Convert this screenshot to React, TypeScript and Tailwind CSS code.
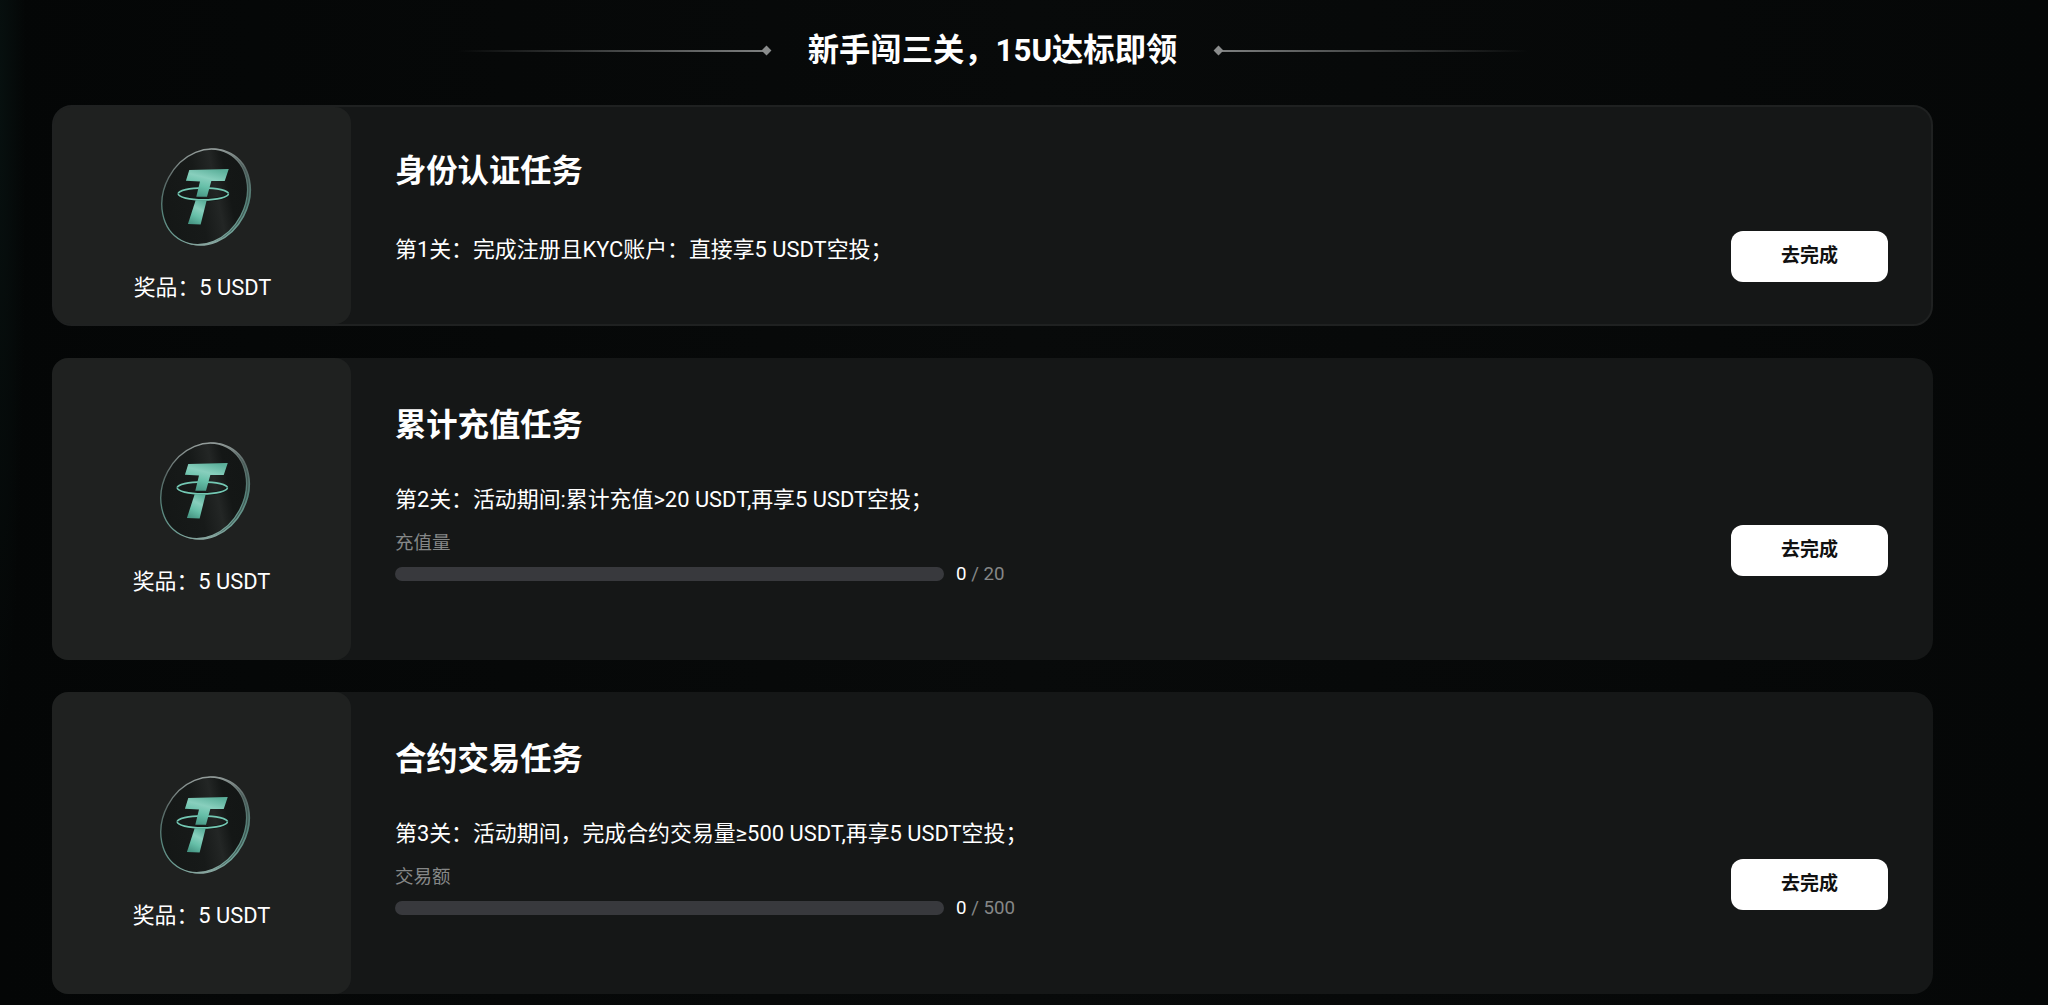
import { useId } from "react";

const tasks = [
  {
    title: "身份认证任务",
    desc: "第1关：完成注册且KYC账户：直接享5 USDT空投；",
  },
  {
    title: "累计充值任务",
    desc: "第2关：活动期间:累计充值>20 USDT,再享5 USDT空投；",
    label: "充值量",
    total: 20,
  },
  {
    title: "合约交易任务",
    desc: "第3关：活动期间，完成合约交易量≥500 USDT,再享5 USDT空投；",
    label: "交易额",
    total: 500,
  },
];

function CoinLogo() {
  const id = useId();
  return (
    <svg viewBox="90 50 280 305" className="ml-[7px] h-[102px] w-[94px]">
      <defs>
        <linearGradient id={`${id}rim`} x1="0.2" y1="0" x2="0.8" y2="1">
          <stop offset="0" stopColor="#a4acaa" />
          <stop offset="0.3" stopColor="#5a6866" />
          <stop offset="0.6" stopColor="#56847b" />
          <stop offset="0.85" stopColor="#6f9f95" />
          <stop offset="1" stopColor="#9aa8a5" />
        </linearGradient>
        <linearGradient id={`${id}t`} x1="0.7" y1="0" x2="0.3" y2="1">
          <stop offset="0" stopColor="#5cb09b" />
          <stop offset="0.35" stopColor="#88cfbd" />
          <stop offset="0.65" stopColor="#66bfa8" />
          <stop offset="1" stopColor="#479684" />
        </linearGradient>
        <linearGradient id={`${id}face`} x1="0" y1="1" x2="1" y2="0">
          <stop offset="0" stopColor="#131615" />
          <stop offset="0.45" stopColor="#171a19" />
          <stop offset="0.6" stopColor="#232625" />
          <stop offset="0.7" stopColor="#141716" />
          <stop offset="1" stopColor="#121514" />
        </linearGradient>
      </defs>
      <ellipse cx="234" cy="203" rx="122" ry="148" transform="rotate(28 234 203)" fill="#3f5853" stroke={`url(#${id}rim)`} strokeWidth="5" />
      <ellipse cx="226" cy="202" rx="122" ry="148" transform="rotate(28 226 202)" fill={`url(#${id}face)`} stroke={`url(#${id}rim)`} strokeWidth="4" />
      <path d="M147 193 A75 18 0 0 1 297 193" fill="none" stroke="#74c9b4" strokeWidth="5" />
      <path d="M180 122 L298 119 L286 155 L246 155 L233 202 L201 202 L212 156 L170 154 Z" fill={`url(#${id}t)`} />
      <path d="M147 193 A75 18 0 0 0 297 193" fill="none" stroke="#141716" strokeWidth="10" />
      <path d="M147 193 A75 18 0 0 0 297 193" fill="none" stroke="#74c9b4" strokeWidth="5" />
      <path d="M199 212 L232 212 L214 285 L176 283 Z" fill={`url(#${id}t)`} />
    </svg>
  );
}

function Divider({ flip }: { flip?: boolean }) {
  return (
    <div className={`flex w-[313px] items-center ${flip ? "flex-row-reverse" : ""}`}>
      <div
        className={`h-[2px] flex-1 ${
          flip
            ? "bg-gradient-to-l from-transparent to-[#7c7e7e]"
            : "bg-gradient-to-r from-transparent to-[#7c7e7e]"
        }`}
      />
      <div className="h-[7px] w-[7px] rotate-45 bg-[#8a8c8c]" />
    </div>
  );
}

function TaskCard({ task, index }: { task: (typeof tasks)[number]; index: number }) {
  const first = index === 0;
  return (
    <section
      className={`flex rounded-[20px] bg-[#151717] ${
        first ? "h-[221px] border-2 border-[#1f2121]" : "h-[302px]"
      }`}
    >
      <div
        className={`flex shrink-0 flex-col items-center justify-center rounded-[16px] bg-[#1f2120] pt-[17px] ${
          first ? "w-[297px]" : "w-[299px]"
        }`}
      >
        <CoinLogo />
        <div className="mt-[26px] text-[21.9px] leading-[28px] text-white">奖品：5 USDT</div>
      </div>
      <div className={`flex-1 pl-[44px] ${first ? "pt-[45px]" : "pt-[48px]"}`}>
        <h3 className="text-[31.3px] font-bold leading-[40px] text-white">{task.title}</h3>
        <p className={`text-[21.9px] leading-[28px] text-white ${first ? "mt-[44px]" : "mt-[40px]"}`}>{task.desc}</p>
        {task.label && (
          <div className="mt-[16px]">
            <div className="text-[18.5px] leading-[26px] text-[#858787]">{task.label}</div>
            <div className="mt-[6px] flex items-center">
              <div className="h-[14px] w-[549px] rounded-full bg-[#38393d]" />
              <span className="ml-[12px] text-[18.7px] leading-[24px] text-white">
                0 <span className="text-[#858787]">/ {task.total}</span>
              </span>
            </div>
          </div>
        )}
      </div>
      <div className={`flex items-center pt-[82px] ${first ? "pr-[43px]" : "pr-[45px]"}`}>
        <button className="h-[51px] w-[157px] rounded-[12px] bg-white text-[19px] font-bold text-[#111]">
          去完成
        </button>
      </div>
    </section>
  );
}

export default function App() {
  return (
    <div className="h-[1005px] overflow-hidden bg-[radial-gradient(ellipse_26px_640px_at_0_100px,#07100f_0,#04060600_100%),linear-gradient(90deg,#040606_0,#080a0a_50%,#050707_100%)] pl-[52px] pr-[115px] font-['Roboto','Noto_Sans_CJK_SC',sans-serif]">
      <div className="flex h-[105px] items-center justify-center pb-[4px]">
        <Divider />
        <h2 className="mx-[38px] text-[31.3px] font-bold leading-[44px] text-white">新手闯三关，15U达标即领</h2>
        <Divider flip />
      </div>
      <div className="flex flex-col gap-[32px]">
        {tasks.map((t, i) => (
          <TaskCard key={t.title} task={t} index={i} />
        ))}
      </div>
    </div>
  );
}
